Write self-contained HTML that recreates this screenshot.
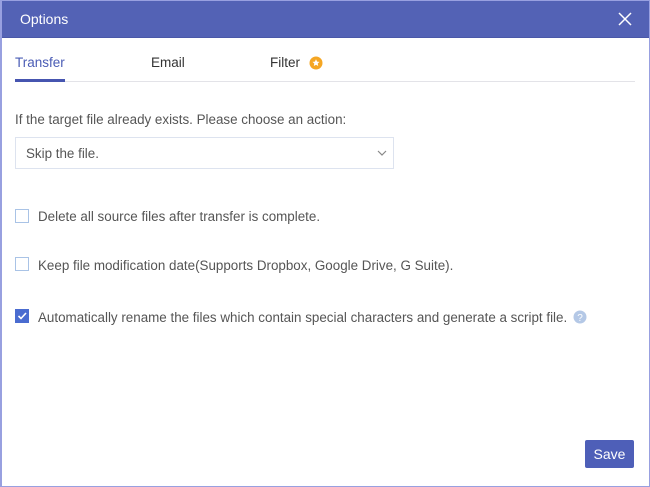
<!DOCTYPE html>
<html><head><style>
*{margin:0;padding:0;box-sizing:border-box}
body{width:650px;height:487px;overflow:hidden;background:#fff;font-family:"Liberation Sans",Arial,sans-serif;position:relative}
.frame{position:absolute;left:0;top:0;width:650px;height:487px;border:1px solid #98a0e0;border-left-width:2px}
.hdr{position:absolute;left:0;top:0;width:650px;height:38px;background:#5362b5;border-bottom:1px solid #4a58a8}
.hdr span{position:absolute;left:20px;top:11px;color:#fff;font-size:14px}
.x{position:absolute;left:618px;top:12px}
.tab{position:absolute;top:55px;font-size:13.5px;color:#333}
.line{position:absolute;left:15px;top:81px;width:620px;height:1px;background:#e3e3e8}
.ul{position:absolute;left:15px;top:79px;width:50px;height:3px;background:#4655b0}
.t{position:absolute;font-size:13.4px;color:#555;white-space:nowrap}
.sel{position:absolute;left:15px;top:137px;width:379px;height:32px;border:1px solid #dde3ef}
.cb{position:absolute;left:15px;width:14px;height:14px;border:1px solid #a9c3e6;background:#fff}
.save{position:absolute;left:585px;top:440px;width:49px;height:28px;background:#4e5fb8;color:#fff;font-size:14px;text-align:center;line-height:28px;border-radius:2px}
</style></head><body>
<div class="hdr"><span>Options</span>
<svg class="x" width="14" height="14" viewBox="0 0 14 14"><path d="M1 1L13 13M13 1L1 13" stroke="#fff" stroke-width="1.5"/></svg></div>
<div class="tab" style="left:15px;color:#4a5cb5">Transfer</div>
<div class="tab" style="left:151px">Email</div>
<div class="tab" style="left:270px">Filter</div>
<svg style="position:absolute;left:309px;top:56px" width="14" height="14" viewBox="0 0 14 14"><circle cx="7" cy="7" r="6.5" fill="#f5a623"/><path d="M7 3.3L8.1 5.6L10.5 5.9L8.7 7.5L9.2 10L7 8.8L4.8 10L5.3 7.5L3.5 5.9L5.9 5.6Z" fill="#fff"/></svg>
<div class="line"></div><div class="ul"></div>
<div class="t" style="left:15px;top:112px">If the target file already exists. Please choose an action:</div>
<div class="sel"><div class="t" style="left:10px;top:8px">Skip the file.</div>
<svg style="position:absolute;left:361px;top:12px" width="10" height="7" viewBox="0 0 10 7"><path d="M1 1L5 5L9 1" stroke="#888" fill="none" stroke-width="1.2"/></svg></div>
<div class="cb" style="top:209px"></div>
<div class="t" style="left:38px;top:209px">Delete all source files after transfer is complete.</div>
<div class="cb" style="top:257px"></div>
<div class="t" style="left:38px;top:258px">Keep file modification date(Supports Dropbox, Google Drive, G Suite).</div>
<div class="cb" style="top:309px;background:#4a6cd0;border-color:#4a6cd0"><svg width="12" height="12" viewBox="0 0 12 12" style="position:absolute;left:0;top:0"><path d="M2.5 6L5 8.5L10 3" stroke="#fff" stroke-width="1.6" fill="none"/></svg></div>
<div class="t" style="left:38px;top:310px">Automatically rename the files which contain special characters and generate a script file.</div>
<svg style="position:absolute;left:573px;top:310px" width="14" height="14" viewBox="0 0 14 14"><circle cx="7" cy="7" r="6.5" fill="#b4c8e6"/><text x="7" y="11" font-size="10" fill="#fff" text-anchor="middle" font-family="Liberation Sans">?</text></svg>
<div class="save">Save</div>
<div class="frame"></div>
</body></html>
